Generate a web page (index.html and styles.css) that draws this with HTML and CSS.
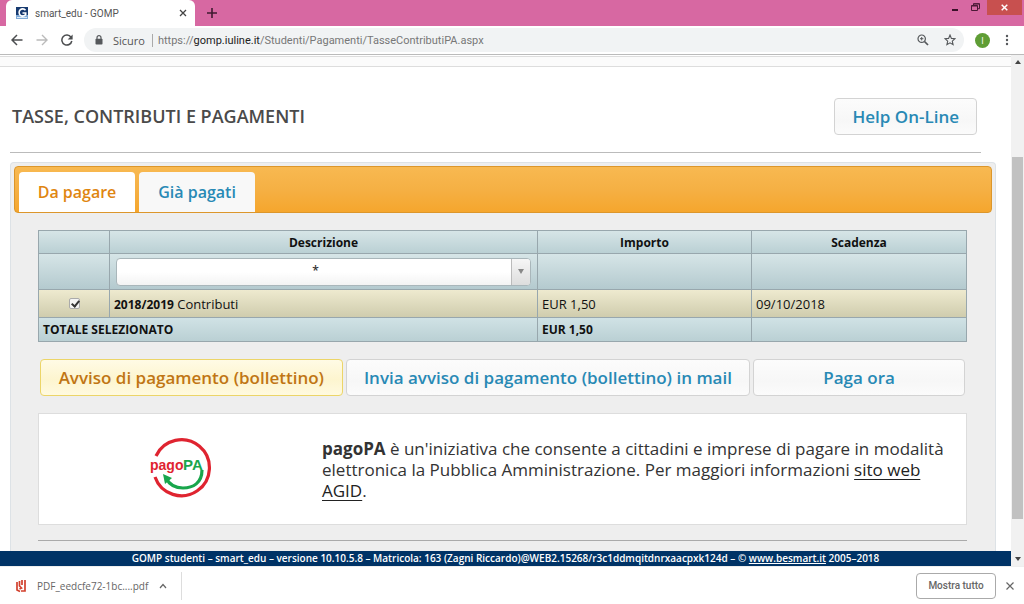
FILE: index.html
```html
<!DOCTYPE html>
<html lang="it">
<head>
<meta charset="utf-8">
<meta name="viewport" content="width=device-width, initial-scale=1">
<title>smart_edu - GOMP</title>
<link rel="stylesheet" href="styles.css">
</head>
<body>
<div class="browser">
  <header class="tabstrip">
    <div class="browser-tab">
      <svg class="favicon" viewBox="0 0 12 12"><rect width="12" height="12" fill="#173a70"/><path d="M0 8h12v4H0z" fill="#7fa9d6"/><path d="M9.500 3.200A3.600 3.600 0 1 0 9.700 7.500V6H6.500" fill="none" stroke="#fff" stroke-width="1.600"/><path d="M1 10.500h10" stroke="#dceaf7"/></svg>
      <span class="tab-title">smart_edu - GOMP</span>
      <button class="icon-button" aria-label="Chiudi scheda"><svg width="8" height="8" viewBox="0 0 8 8"><path d="M1 1l6 6M7 1L1 7" stroke="#444" stroke-width="1.300"/></svg></button>
    </div>
    <button class="icon-button new-tab" aria-label="Nuova scheda"><svg width="10" height="10" viewBox="0 0 10 10"><path d="M5 0v10M0 5h10" stroke="#401a30" stroke-width="1.600"/></svg></button>
    <div class="window-controls">
      <button class="window-button" aria-label="Riduci"><svg width="8" height="8" viewBox="0 0 8 8"><path d="M1 6h6" stroke="#3b1029" stroke-width="2"/></svg></button>
      <button class="window-button" aria-label="Ripristina"><svg width="9" height="9" viewBox="0 0 9 9"><path d="M.5 2.500h6v5h-6zM2.500 2V.7h6v5H7M.5 3h6M2.500 1h6" fill="none" stroke="#4b1836"/></svg></button>
      <button class="window-button window-close" aria-label="Chiudi"><svg width="7" height="7" viewBox="0 0 7 7"><path d="M.7.700l5.600 5.600M6.300.700L.7 6.300" stroke="#fff" stroke-width="1.500"/></svg></button>
    </div>
  </header>

  <nav class="toolbar">
    <button class="icon-button" aria-label="Indietro"><svg width="12" height="12" viewBox="0 0 12 12"><path d="M11.500 6H1.200M6 1L1 6l5 5" fill="none" stroke="#4c4e50" stroke-width="1.500"/></svg></button>
    <button class="icon-button" aria-label="Avanti"><svg width="12" height="12" viewBox="0 0 12 12"><path d="M.5 6h10.300M6 1l5 5-5 5" fill="none" stroke="#bbb" stroke-width="1.400"/></svg></button>
    <button class="icon-button" aria-label="Ricarica"><svg width="12" height="12" viewBox="0 0 12 12"><path d="M10 3.200A5 5 0 1 0 10.800 7" fill="none" stroke="#4c4e50" stroke-width="1.500"/><path d="M11.600.5v5h-5z" fill="#4c4e50"/></svg></button>
    <div class="address">
      <svg width="8" height="10" viewBox="0 0 8 10"><path d="M2 4V2.700a2 2 0 0 1 4 0V4" fill="none" stroke="#55585b" stroke-width="1.200"/><rect x=".5" y="3.800" width="7" height="5.700" rx=".8" fill="#55585b"/></svg>
      <span class="secure">Sicuro</span>
      <span class="url">https://<span class="host">gomp.iuline.it</span>/Studenti/Pagamenti/TasseContributiPA.aspx</span>
      <button class="icon-button" aria-label="Zoom"><svg width="12" height="12" viewBox="0 0 12 12"><circle cx="4.700" cy="4.700" r="3.700" fill="none" stroke="#55585b" stroke-width="1.200"/><path d="M7.500 7.500L11 11" stroke="#55585b" stroke-width="1.700"/><path d="M4.700 3v3.400M3 4.700h3.400" stroke="#55585b"/></svg></button>
      <button class="icon-button" aria-label="Preferiti"><svg width="12" height="12" viewBox="0 0 12 12"><path d="M6 1l1.400 3.400 3.600.300-2.700 2.400.8 3.600L6 8.800l-3.100 1.900.8-3.600L1 4.700l3.600-.3z" fill="none" stroke="#55585b" stroke-width="1.100"/></svg></button>
    </div>
    <button class="avatar">I</button>
    <button class="icon-button" aria-label="Menu"><svg width="4" height="12" viewBox="0 0 4 12" fill="#55585b"><circle cx="2" cy="2" r="1.200"/><circle cx="2" cy="6" r="1.200"/><circle cx="2" cy="10" r="1.200"/></svg></button>
  </nav>

  <div class="viewport">
    <div class="page">
      <div class="page-edge"></div>
      <div class="heading">
        <h1 class="title">TASSE, CONTRIBUTI E PAGAMENTI</h1>
        <button class="button help">Help On-Line</button>
      </div>
      <main class="panel">
        <div class="tabs" role="tablist">
          <button class="tab tab-active" role="tab" aria-selected="true">Da pagare</button>
          <button class="tab" role="tab" aria-selected="false">Già pagati</button>
        </div>
        <div class="panel-body">
          <table class="fees">
            <colgroup><col class="col-check"><col class="col-description"><col class="col-amount"><col class="col-due"></colgroup>
            <thead>
              <tr class="head-row"><th></th><th>Descrizione</th><th>Importo</th><th>Scadenza</th></tr>
              <tr class="filter-row"><td></td><td><div class="filter"><select class="filter-select" aria-label="Descrizione"><option>*</option></select><span class="filter-arrow"><svg width="6" height="5" viewBox="0 0 6 5"><path d="M0 0h6L3 5z" fill="#888"/></svg></span></div></td><td></td><td></td></tr>
            </thead>
            <tbody>
              <tr class="fee-row"><td class="check-cell"><input class="check" id="fee" type="checkbox" checked></td><td><label for="fee"><b>2018/2019</b> Contributi</label></td><td>EUR 1,50</td><td>09/10/2018</td></tr>
            </tbody>
            <tfoot>
              <tr class="total-row"><td colspan="2">TOTALE SELEZIONATO</td><td>EUR 1,50</td><td></td></tr>
            </tfoot>
          </table>
          <div class="actions">
            <button class="button button-hot">Avviso di pagamento (bollettino)</button>
            <button class="button">Invia avviso di pagamento (bollettino) in mail</button>
            <button class="button">Paga ora</button>
          </div>
          <section class="info">
            <div class="info-logo">
              <svg width="64" height="62" viewBox="0 0 64 62" role="img" aria-label="pagoPA">
                <path d="M7 18A28 28 0 1 1 6 39" fill="none" stroke="#df2430" stroke-width="3.200"/>
                <path d="M53 32C53 45 44 50 34 50C26 50 20 46 17 40" fill="none" stroke="#19a64c" stroke-width="3.200"/>
                <path d="M14 36l9 4-7 6z" fill="#19a64c"/>
                <text class="logo-pago" x="1" y="32">pago</text><text class="logo-pa" x="34" y="32">PA</text>
              </svg>
            </div>
            <p class="info-text"><b>pagoPA</b> è un'iniziativa che consente a cittadini e imprese di pagare in modalità elettronica la Pubblica Amministrazione. Per maggiori informazioni <a class="info-link" href="#">sito web AGID</a>.</p>
          </section>
          <hr class="rule">
        </div>
      </main>
      <footer class="footer">GOMP studenti – smart_edu – versione 10.10.5.8 – Matricola: 163 (Zagni Riccardo)@WEB2.15268/r3c1ddmqitdnrxaacpxk124d – © <a class="footer-link" href="#">www.besmart.it</a> 2005–2018</footer>
    </div>
    <div class="scrollbar">
      <svg width="6" height="4" viewBox="0 0 6 4"><path d="M0 4h6L3 0z" fill="#444"/></svg>
      <div class="track"><div class="thumb"></div></div>
      <svg width="6" height="4" viewBox="0 0 6 4"><path d="M0 0h6L3 4z" fill="#444"/></svg>
    </div>
  </div>

  <div class="downloads">
    <button class="download">
      <svg width="10" height="14" viewBox="0 0 10 14"><path d="M1 3v8l3 1.500M9 1v11H5M3.500 2v5l2 2-2 1M6 1v5" fill="none" stroke="#d2402d" stroke-width="1.700"/></svg>
      <span>PDF_eedcfe72-1bc....pdf</span>
      <svg width="8" height="6" viewBox="0 0 8 6"><path d="M1 5l3-3.500L7 5" fill="none" stroke="#666" stroke-width="1.200"/></svg>
    </button>
    <button class="show-all">Mostra tutto</button>
    <button class="icon-button" aria-label="Chiudi download"><svg width="8" height="8" viewBox="0 0 8 8"><path d="M.5.500l7 7M7.500.500l-7 7" stroke="#666" stroke-width="1.200"/></svg></button>
  </div>
</div>
</body>
</html>
```
FILE: styles.css
```css
* { box-sizing: border-box; }
body { margin: 0; font-family: "Open Sans", sans-serif; font-size: 11px; color: #555; background: #fff; }
button { font: inherit; color: inherit; padding: 0; border: 0; background: none; cursor: pointer; }
svg { display: block; flex: none; }
.browser { display: flex; flex-direction: column; min-height: 100vh; }

.tabstrip { display: flex; background: #d768a2; height: 26px; padding-left: 6px; }
.browser-tab { display: flex; align-items: center; gap: 7px; width: 189px; padding: 0 8px 0 10px; background: #fff; border-radius: 6px 6px 0 0; }
.favicon { width: 12px; height: 12px; }
.tab-title { flex: 1; font-family: Roboto, sans-serif; font-size: 10px; }
.icon-button { display: flex; align-items: center; justify-content: center; }
.new-tab { margin-left: 12px; }
.window-controls { display: flex; margin-left: auto; padding-right: 2px; }
.window-button { display: flex; align-items: center; justify-content: center; width: 20px; height: 15px; }
.window-close { width: 35px; margin-left: 2px; background: #c8504f; }

.toolbar { display: flex; align-items: center; gap: 13px; height: 29px; padding: 0 15px 0 11px; border-bottom: 1px solid #bbb; }
.address { flex: 1; display: flex; align-items: center; height: 24px; margin-left: -2px; padding: 0 8px 0 11px; gap: 10px; border-radius: 12px; background: #f1f3f4; }
.secure { padding-right: 7px; border-right: 1px solid #aaa; line-height: 13px; }
.url { flex: 1; margin-left: -5px; color: #777; font-family: Roboto, sans-serif; }
.host { color: #222; }
.address .icon-button { margin-left: 5px; }
.avatar { width: 15px; height: 15px; margin: 0 2px 0 -2px; border-radius: 50%; background: #5f9d35; color: #fff; font-size: 9px; line-height: 15px; }

.viewport { flex: 1; display: flex; }
.page { flex: 1; display: flex; flex-direction: column; }
.page-edge { height: 11px; border-top: 1px solid #ddd; border-bottom: 1px solid #ddd; background: #fbfbfb; margin-top: 1px; }
.heading { display: flex; align-items: center; justify-content: space-between; height: 86px; margin: 0 30px 0 10px; padding: 13px 4px 0 2px; border-bottom: 1px solid #bbb; }
.title { margin: 0; font-size: 18px; font-weight: 600; color: #4a4a4a; }
.button { height: 37px; padding: 0 17px; border: 1px solid #d3d3d3; border-radius: 4px; background: linear-gradient(#fcfcfc, #f7f7f7 60%, #fbfbfb); color: #2889b5; font-size: 17px; font-weight: 600; white-space: nowrap; }
.button-hot { border-color: #ecd568; background: linear-gradient(#fffbe5, #fdf5cf 55%, #fffae0); color: #c07514; }

.panel { flex: 1; margin: 9px 15px 0 10px; padding: 3px; border: 1px solid #dde2e6; border-bottom: 0; border-radius: 4px 4px 0 0; background: #eee; }
.tabs { display: flex; align-items: flex-end; gap: 4px; height: 47px; padding: 0 4px; border: 1px solid #dc962b; border-radius: 4px; background: linear-gradient(#f8b951, #f5b044 50%, #f5a62d); }
.tab { height: 40px; min-width: 116px; padding: 0 18px; border-radius: 4px 4px 0 0; background: #f8f8f8; color: #2889b5; font-size: 16px; font-weight: 600; }
.tab-active { background: #fff; color: #df8611; }
.panel-body { padding: 17px 25px 0 24px; }

.fees { width: 100%; table-layout: fixed; border-collapse: collapse; color: #111; font-size: 12px; }
.col-check { width: 71px; }
.col-amount { width: 214px; }
.col-due { width: 215px; }
.fees td, .fees th { padding: 0 4px; border: 1px solid #98a7ad; font-weight: 500; }
.fees b, .fees th, .fees .total-row td { font-weight: 700; }
.head-row { height: 23px; background: linear-gradient(#d6e5e7, #b9cfd3); }
.filter-row { height: 36px; background: linear-gradient(#d6e5e7, #b3c9ce); }
.fee-row { height: 28px; background: linear-gradient(#eeeacf, #cecbac); font-size: 13px; }
.fee-row b { font-size: 12px; }
.total-row { height: 24px; background: linear-gradient(#d0e2e5, #b9cfd3); }
.fees .check-cell { text-align: center; }
.check { appearance: none; display: block; position: relative; width: 11px; height: 11px; margin: 0 auto; border: 1px solid #aaa; border-radius: 2px; background: #f4f4f4; }
.check:checked::after { content: ""; position: absolute; left: 3px; top: 0; width: 3px; height: 6px; border: solid #333; border-width: 0 2px 2px 0; transform: rotate(40deg); }
.filter { position: relative; margin: 0 2px; }
.filter-select { display: block; appearance: none; width: 100%; height: 28px; padding: 0 16px 3px 0; border: 1px solid #a9b6ba; border-radius: 4px; background: linear-gradient(#fff 50%, #f3f3f3); color: #333; font: 600 12px "Open Sans", sans-serif; text-align: center; text-align-last: center; }
.filter-arrow { position: absolute; top: 1px; right: 1px; bottom: 1px; display: flex; align-items: center; justify-content: center; width: 19px; border-left: 1px solid #bbb; border-radius: 0 3px 3px 0; background: linear-gradient(#f6f6f6, #ddd); pointer-events: none; }

.actions { display: grid; grid-template-columns: 303fr 405fr 212fr; gap: 3px; margin: 17px 2px; }
.actions .button { padding: 0; }
.info { display: grid; grid-template-columns: 283px 1fr; align-items: center; height: 112px; border: 1px solid #ddd; background: #fff; }
.info-logo { display: flex; justify-content: center; }
.logo-pago, .logo-pa { font-family: "Liberation Sans Narrow", "Liberation Sans", sans-serif; font-weight: 700; }
.logo-pago { fill: #df2430; font-size: 14px; }
.logo-pa { fill: #19a64c; font-size: 15px; }
.info-text { margin: 0; padding-right: 20px; font-size: 17px; line-height: 21px; color: #333; }
.info-link { color: #222; text-underline-offset: 3px; }
.rule { margin: 15px 0 6px; border: 0; border-top: 1px solid #aaa; }
.footer { height: 15px; background: #003366; color: #fff; font-size: 10px; font-weight: 600; line-height: 15px; text-align: center; white-space: nowrap; }
.footer-link { color: #fff; }

.scrollbar { display: flex; flex-direction: column; align-items: center; width: 13px; padding: 5px 0; gap: 5px; background: #f1f1f1; }
.track { flex: 1; width: 100%; padding: 88px 1px 33px; display: flex; }
.thumb { flex: 1; background: #c1c1c1; }

.downloads { display: flex; align-items: center; height: 38px; padding-right: 10px; gap: 10px; border-top: 1px solid #eee; }
.download { display: flex; align-items: center; gap: 11px; height: 28px; padding: 0 14px 0 16px; border-right: 1px solid #ddd; color: #666; font-size: 10px; }
.show-all { margin-left: auto; width: 80px; height: 26px; border: 1px solid #aaa; border-radius: 4px; font-family: Roboto, sans-serif; font-size: 10px; font-weight: 500; color: #666; }
```
